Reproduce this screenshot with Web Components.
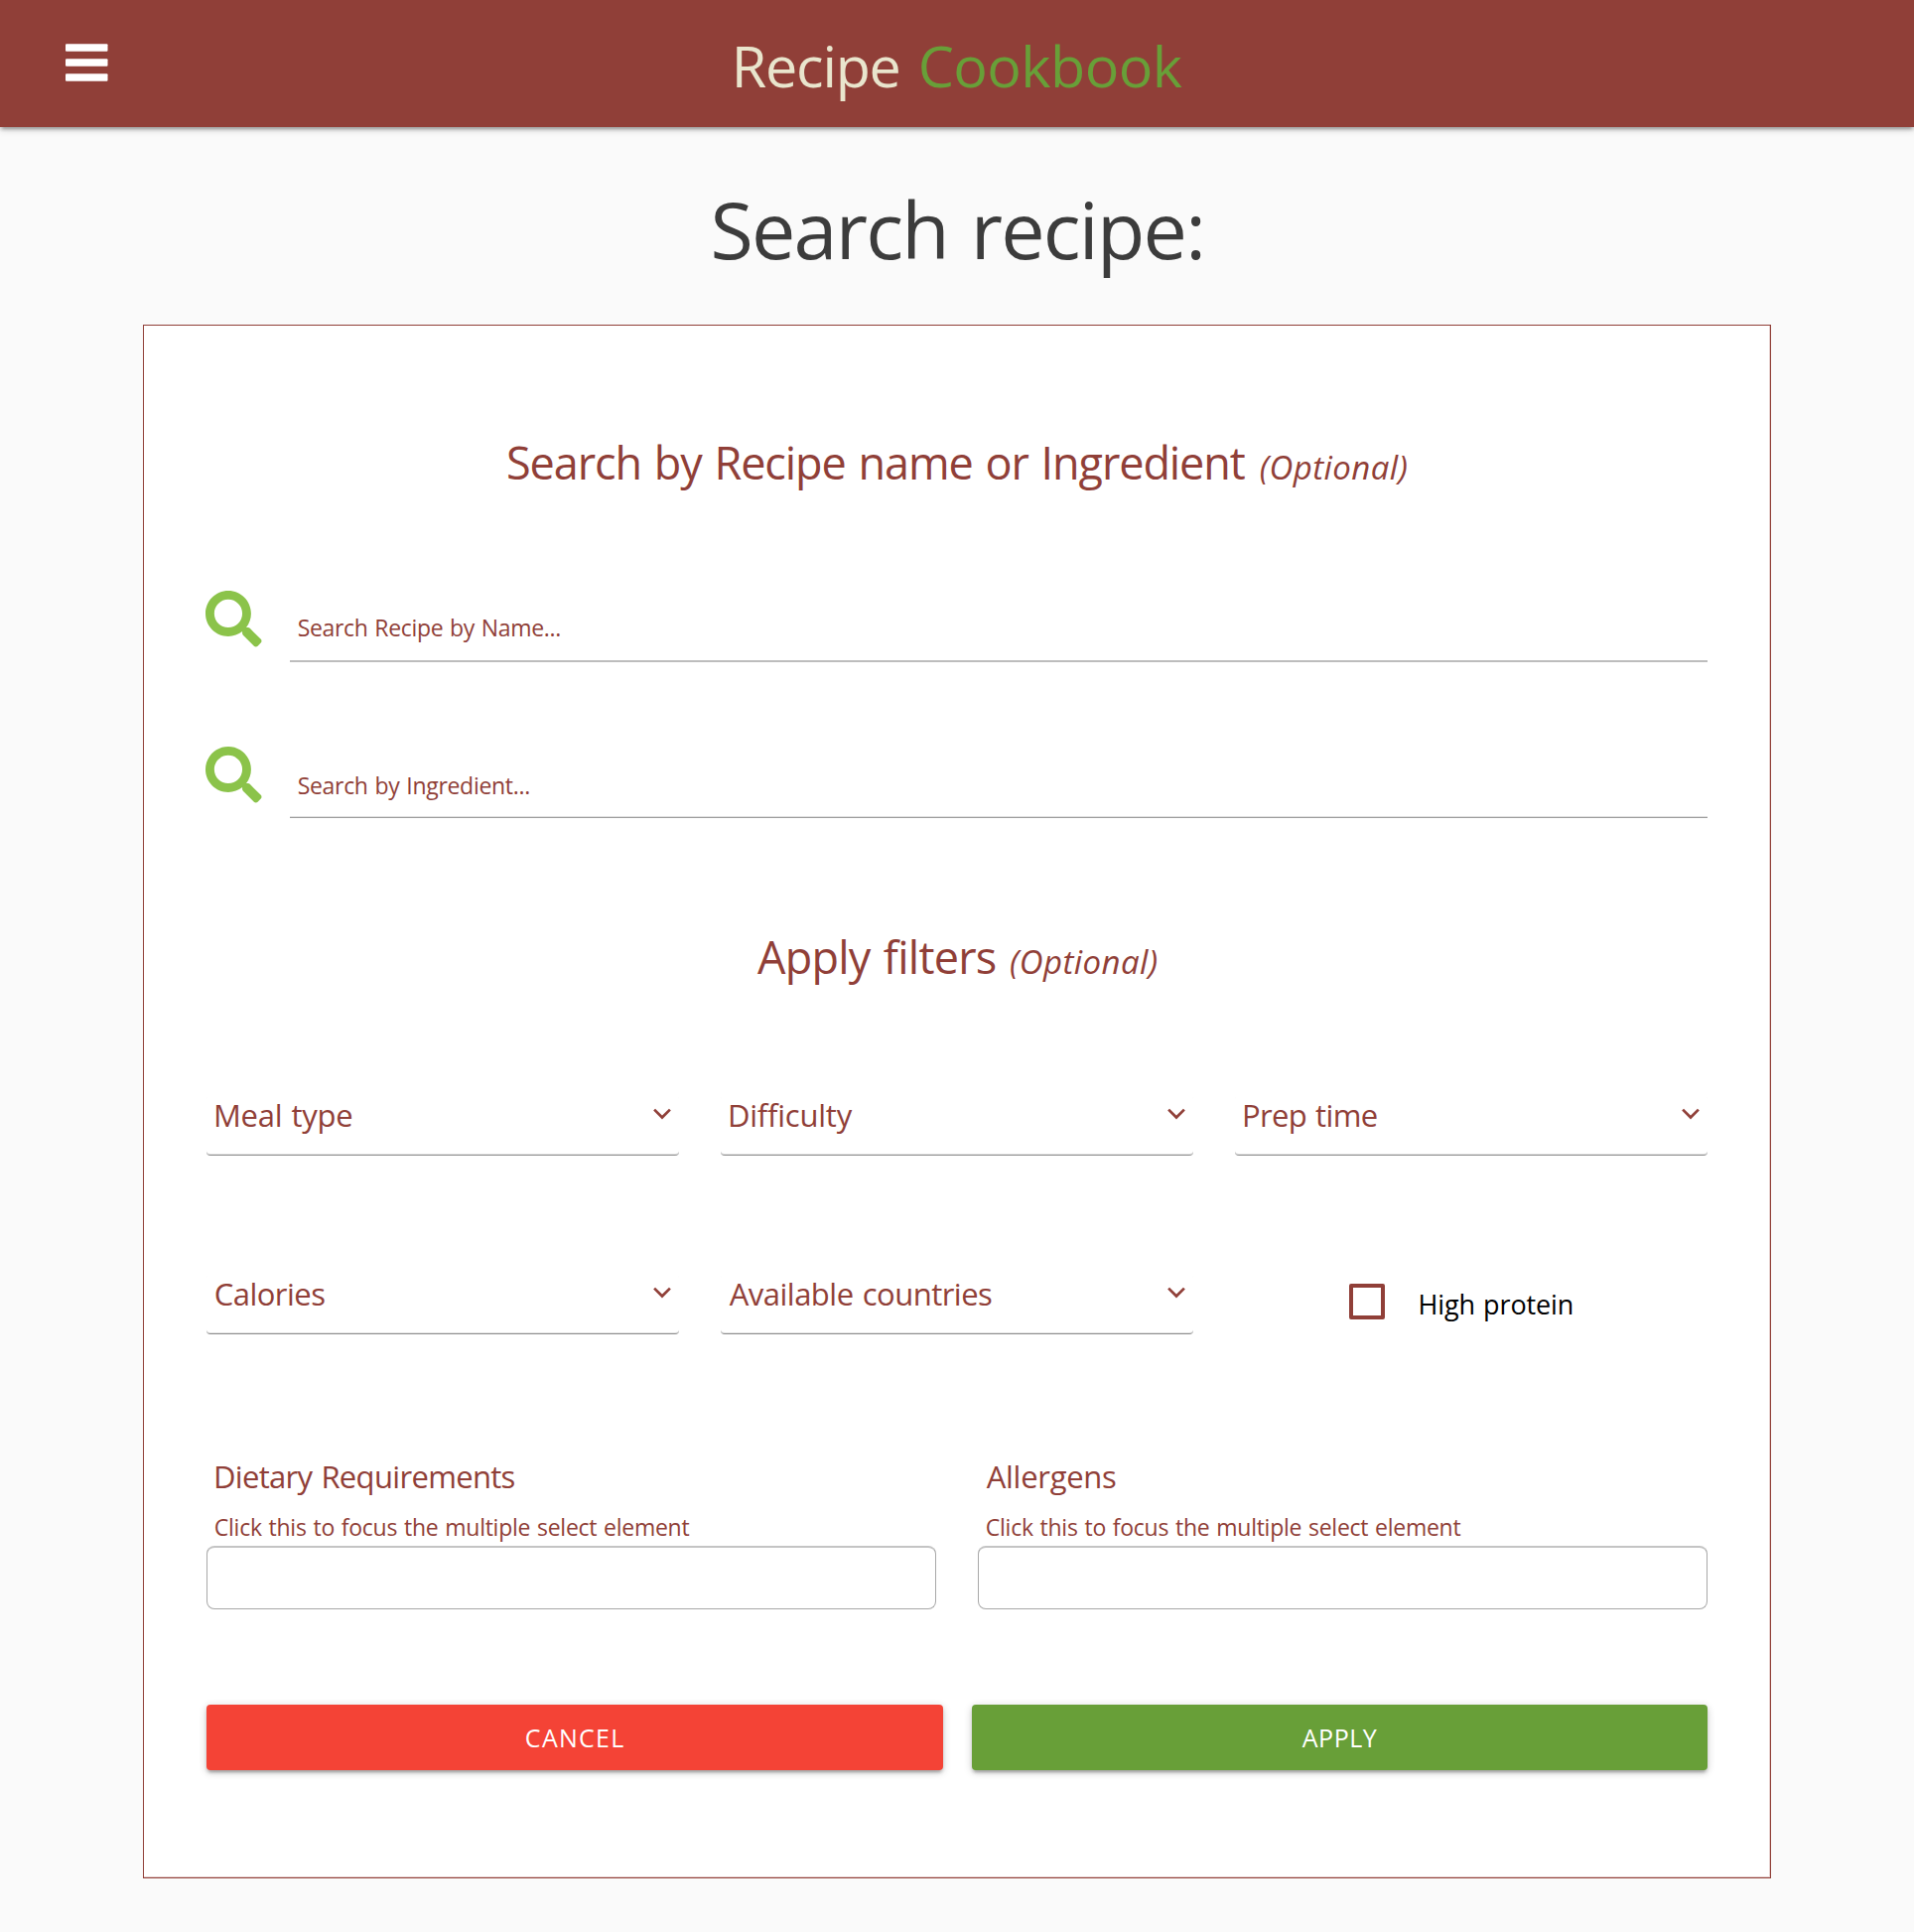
<!DOCTYPE html>
<html lang="en">
<head>
<meta charset="utf-8">
<title>Recipe Cookbook</title>
<style>
html,body{margin:0;background:#fafafa}
body{font-family:"Open Sans","Noto Sans",sans-serif;color:#903f38;min-height:1946px}
</style>
</head>
<body>
<recipe-app></recipe-app>
<script>
const define = (name, html, setup) => customElements.define(name, class extends HTMLElement {
  connectedCallback() {
    if (this.shadowRoot) return;
    const t = document.createElement('template');
    t.innerHTML = html;
    this.attachShadow({mode: 'open'}).append(t.content.cloneNode(true));
    if (setup) setup.call(this, this.shadowRoot);
  }
});

/* A line of text tracked so that its visible width equals the ink attribute.
   Its baseline sits one font-size below its top edge. Measured at ten times
   the size, because canvas bounds are rounded to whole pixels. Word gaps are
   a little wider than the font's own; straight-stemmed capitals keep part of
   their side bearing. */
const ctx = document.createElement('canvas').getContext('2d');
define('fit-text', `<style>
  :host{display:block;white-space:pre;line-height:1.224;font-variant-ligatures:none}
  span{display:block;word-spacing:.05em}
</style><span><slot></slot></span>`, function (root) {
  const size = +this.getAttribute('size'), ink = +this.getAttribute('ink'), text = this.textContent;
  const style = this.hasAttribute('italic') ? 'italic ' : '';
  ctx.font = `${style}${size * 10}px "Open Sans"`;
  ctx.letterSpacing = '0.01px';
  const m = ctx.measureText(text);
  const left = m.actualBoundingBoxLeft / 10, right = m.actualBoundingBoxRight / 10;
  const nudge = Math.max(0, Math.min(1.4, -left * .4));
  const words = (text.split(' ').length - 1) * .05 * size;
  const gap = (ink - nudge - words - left - right) / (text.length - 1);
  const span = root.querySelector('span');
  this.style.width = ink + 'px';
  this.style.fontSize = size + 'px';
  if (style) this.style.fontStyle = 'italic';
  span.style.letterSpacing = gap.toFixed(3) + 'px';
  span.style.marginLeft = (left + nudge).toFixed(2) + 'px';
});

define('menu-icon', `<style>
  :host{display:block;width:43px;height:38px}
  svg{display:block}
</style><svg width="43" height="38" fill="#fff"><rect y=".3" width="42.500" height="7.500" rx="1"/><rect y="15.300" width="42.500" height="7.500" rx="1"/><rect y="30.300" width="42.500" height="7.500" rx="1"/></svg>`);

define('site-header', `<style>
  :host{display:grid;grid-template-columns:1fr auto 1fr;height:128px;background:#903f38;
    box-shadow:0 3px 3px 0 rgba(0,0,0,.14),0 5px 2px -3px rgba(0,0,0,.12),0 2px 8px 0 rgba(0,0,0,.2)}
  menu-icon{margin:44px 0 0 65.500px}
  .brand{display:flex;gap:21px;padding-top:31px;margin-left:4px}
  .a{color:#e9e5cd}.b{color:#689f38}
</style><menu-icon></menu-icon>
<div class="brand"><fit-text class="a" size="57.500" ink="164.500">Recipe</fit-text><fit-text class="b" size="57.500" ink="265">Cookbook</fit-text></div>`);

define('section-title', `<style>
  :host{display:flex;justify-content:center;align-items:baseline;gap:15px;height:56px}
</style><slot></slot>`);

define('search-field', `<style>
  :host{display:grid;grid-template-columns:57px 1428px;justify-content:space-between;height:72px}
  svg{display:block;margin-left:-.7px}
  .line{box-sizing:border-box;height:72px;padding:var(--drop,23px) 0 0 8.300px;border-bottom:2px solid #bdbdbd}
  :host([thin]) .line{--drop:25px;border-bottom:1px solid #9e9e9e;box-shadow:inset 0 -1px #e0e0e0}
</style><svg width="56.500" height="56.500" viewBox="0 0 512 512" fill="#8bc34a"><path d="M505 442.700L405.300 343c-4.500-4.500-10.600-7-17-7H372c27.600-35.300 44-79.700 44-128C416 93.100 322.900 0 208 0S0 93.100 0 208s93.100 208 208 208c48.300 0 92.700-16.400 128-44v16.300c0 6.400 2.500 12.500 7 17l99.700 99.700c9.400 9.400 24.600 9.400 33.900 0l28.300-28.300c9.400-9.400 9.400-24.600.1-34zM208 336c-70.700 0-128-57.200-128-128 0-70.700 57.200-128 128-128 70.700 0 128 57.200 128 128 0 70.700-57.200 128-128 128z"/></svg>
<div class="line"><slot></slot></div>`);

define('select-field', `<style>
  :host{box-sizing:border-box;display:flex;justify-content:space-between;height:60px;padding:1px 8.500px 0 8.700px;
    border-bottom:1px solid #8e8e8e;border-radius:4px;box-shadow:inset 0 -1px #e4e4e4}
  svg{display:block;margin-top:11px}
</style><slot></slot><svg width="18" height="12" fill="none" stroke="#903f38" stroke-width="2.700"><path d="M1.100 1.600L9 9.500L16.900 1.600"/></svg>`);

define('check-field', `<style>
  :host{display:flex;padding-left:114.500px}
  i{box-sizing:border-box;width:36px;height:36px;margin:9px 35.500px 0 0;border:4px solid #903f38;border-radius:2px}
  fit-text{margin-top:13px;color:#000}
</style><i></i><fit-text size="27" ink="153.500">High protein</fit-text>`);

define('multi-select', `<style>
  :host{display:block}
  div{box-sizing:border-box;padding:1px 0 0 8.700px;height:56px}
  div+div{height:33px;padding-top:0}
  p{box-sizing:border-box;height:64px;margin:0;border:1px solid #a8a8a8;border-top:2px solid #c4c4c4;border-radius:8px}
</style><div><slot></slot></div><div><fit-text size="23" ink="477.500">Click this to focus the multiple select element</fit-text></div><p></p>`);

define('action-button', `<style>
  :host{display:flex;justify-content:center;height:66px;padding-top:18px;box-sizing:border-box;border-radius:4px;color:#fff;
    box-shadow:0 3px 3px 0 rgba(0,0,0,.14),0 5px 2px -3px rgba(0,0,0,.12),0 2px 8px 0 rgba(0,0,0,.2)}
</style><slot></slot>`);

define('recipe-app', `<style>
  :host{display:block}
  h1{display:flex;justify-content:center;height:97px;margin:55px 0 47px;font-weight:400;color:#3c3c3c}
  main{box-sizing:border-box;width:1640px;height:1565px;margin:0 auto;padding:110px 63px 0;border:1px solid #903f38;background:#fff;
    box-shadow:inset -1px -1px #e6d0ce}
  .s1{margin-top:101px}.s2{margin-top:85px}
  .t2{margin-top:112px}
  .filters{display:grid;grid-template-columns:repeat(3,1fr);gap:120px 42px;margin-top:112px}
  .multi{display:grid;grid-template-columns:1fr 1fr;gap:42px;margin-top:124px}
  .actions{display:grid;grid-template-columns:1fr 1fr;gap:29px;margin-top:96px}
  .no{background:#f44336}.yes{background:#689f38}
</style>
<site-header></site-header>
<h1><fit-text size="79" ink="492.500">Search recipe:</fit-text></h1>
<main>
  <section-title><fit-text size="45" ink="743">Search by Recipe name or Ingredient</fit-text><fit-text italic size="33" ink="147.500">(Optional)</fit-text></section-title>
  <search-field class="s1"><fit-text size="23" ink="263.300">Search Recipe by Name...</fit-text></search-field>
  <search-field class="s2" thin><fit-text size="23" ink="232.300">Search by Ingredient...</fit-text></search-field>
  <section-title class="t2"><fit-text size="45" ink="239.500">Apply filters</fit-text><fit-text italic size="33" ink="147.500">(Optional)</fit-text></section-title>
  <div class="filters">
    <select-field><fit-text size="31" ink="137.500">Meal type</fit-text></select-field>
    <select-field><fit-text size="31" ink="124">Difficulty</fit-text></select-field>
    <select-field><fit-text size="31" ink="134">Prep time</fit-text></select-field>
    <select-field><fit-text size="31" ink="110">Calories</fit-text></select-field>
    <select-field><fit-text size="31" ink="264">Available countries</fit-text></select-field>
    <check-field></check-field>
  </div>
  <div class="multi">
    <multi-select><fit-text size="31" ink="301.500">Dietary Requirements</fit-text></multi-select>
    <multi-select><fit-text size="31" ink="130">Allergens</fit-text></multi-select>
  </div>
  <div class="actions">
    <action-button class="no"><fit-text size="25" ink="98">CANCEL</fit-text></action-button>
    <action-button class="yes"><fit-text size="25" ink="75">APPLY</fit-text></action-button>
  </div>
</main>`);
</script>
</body>
</html>
